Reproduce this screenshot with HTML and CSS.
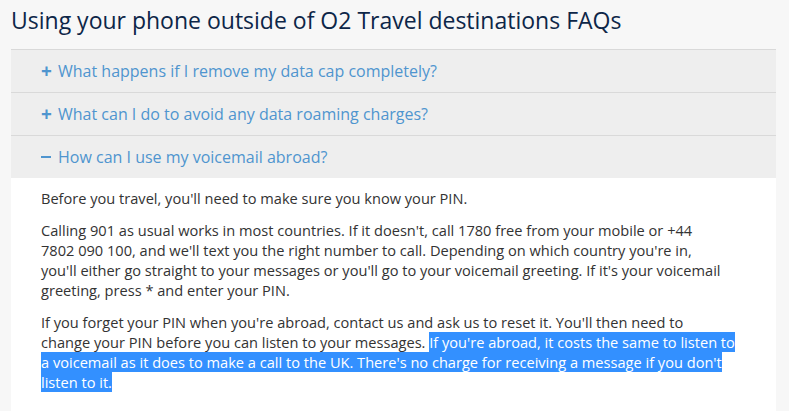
FILE: index.html
```html
<!DOCTYPE html>
<html lang="en">
<head>
<meta charset="utf-8">
<title>Using your phone outside of O2 Travel destinations FAQs</title>
<link rel="stylesheet" href="styles.css">
</head>
<body>
<main class="page">
  <h1 class="title">Using your phone outside of O2 Travel destinations FAQs</h1>
  <section class="accordion">
    <div class="item">
      <button class="question"><span class="sign">+</span>What happens if I remove my data cap completely?</button>
    </div>
    <div class="item">
      <button class="question"><span class="sign">+</span>What can I do to avoid any data roaming charges?</button>
    </div>
    <div class="item open">
      <button class="question"><span class="sign minus" aria-label="collapse"></span>How can I use my voicemail abroad?</button>
      <div class="answer">
        <p>Before you travel, you'll need to make sure you know your PIN.</p>
        <p>Calling 901 as usual works in most countries. If it doesn't, call 1780 free from your mobile or +44<br>7802 090 100, and we'll text you the right number to call. Depending on which country you're in,<br>you'll either go straight to your messages or you'll go to your voicemail greeting. If it's your voicemail<br>greeting, press * and enter your PIN.</p>
        <p>If you forget your PIN when you're abroad, contact us and ask us to reset it. You'll then need to<br>change your PIN before you can listen to your messages. <span class="selected">If you're abroad, it costs the same to listen to <br>a voicemail as it does to make a call to the UK. There's no charge for receiving a message if you don't <br>listen to it.</span></p>
      </div>
    </div>
  </section>
</main>
</body>
</html>
```
FILE: styles.css
```css
* { box-sizing: border-box; }
html, body { margin: 0; padding: 0; }
body {
  background: #f7f7f7;
  font-family: "Open Sans", "Noto Sans", sans-serif;
  width: 789px;
  height: 411px;
  overflow: hidden;
}
.page {
  padding: 0 13px 0 11px;
}
.title {
  margin: 0;
  padding-top: 3px;
  height: 49px;
  font-size: 23px;
  font-weight: 400;
  line-height: 34px;
  color: #0d2648;
}
.accordion {
  display: flex;
  flex-direction: column;
}
.item {
  border-top: 1px solid #d9d9d9;
}
.question {
  display: flex;
  align-items: center;
  width: 100%;
  height: 42px;
  border: 0;
  margin: 0;
  padding: 0 0 0 30px;
  background: #eeeeee;
  font-family: inherit;
  font-size: 16px;
  color: #4f95cf;
  text-align: left;
  cursor: pointer;
}
.sign {
  display: inline-block;
  width: 17px;
  font-size: 19px;
  font-weight: 700;
  line-height: 1;
}
.sign.minus {
  display: inline-flex;
  align-items: center;
  height: 16px;
}
.sign.minus::before {
  content: "";
  display: block;
  width: 10px;
  height: 2px;
  background: #4f95cf;
}
.answer {
  background: #ffffff;
  padding: 10px 8px 30px 30px;
  height: 240px;
}
.answer p {
  margin: 0 0 12px 0;
  font-size: 14.6px;
  line-height: 20px;
  color: #333333;
}
.selected {
  background: #3390ff;
  color: #ffffff;
}
```
